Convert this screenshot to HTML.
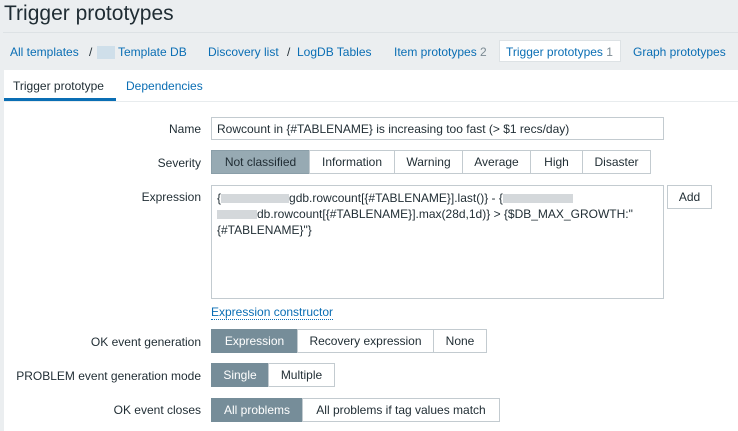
<!DOCTYPE html>
<html><head><style>
*{box-sizing:border-box;margin:0;padding:0}
body{width:738px;height:431px;overflow:hidden;background:#ebeef0;font-family:"Liberation Sans",sans-serif;font-size:12px;color:#1f2c33;position:relative}
.a{position:absolute;white-space:nowrap}
.lnk{color:#0a6eb4}
.lbl{position:absolute;right:537px;text-align:right;white-space:nowrap}
.bg{position:absolute;display:flex;height:24px}
.bg div{border:1px solid #c3cbd0;margin-left:-1px;background:#fff;display:flex;align-items:center;justify-content:center;height:24px}
.bg div.s{background:#768d99;color:#fff;border-color:#768d99}
.blur{display:inline-block;height:9px;background:#d4d8db;vertical-align:middle}
</style></head><body>
<div class="a" style="left:4px;top:2px;font-size:21px;color:#1f2c33">Trigger prototypes</div>
<div class="a" style="left:3px;top:32px;width:735px;height:1px;background:#dde2e5"></div>
<div class="a lnk" style="left:10px;top:45px">All templates</div>
<div class="a" style="left:89px;top:45px">/</div>
<div class="a" style="left:97px;top:46px;width:18px;height:13px;background:#cfdfea"></div>
<div class="a lnk" style="left:118px;top:45px">Template DB</div>
<div class="a lnk" style="left:208px;top:45px">Discovery list</div>
<div class="a" style="left:287px;top:45px">/</div>
<div class="a lnk" style="left:297px;top:45px">LogDB Tables</div>
<div class="a lnk" style="left:394px;top:45px">Item prototypes <span style="color:#7b8a93">2</span></div>
<div class="a" style="left:499px;top:40px;width:122px;height:22px;background:#fff;border:1px solid #dde2e5"></div>
<div class="a lnk" style="left:506px;top:45px">Trigger prototypes <span style="color:#7b8a93">1</span></div>
<div class="a lnk" style="left:633px;top:45px">Graph prototypes</div>
<div class="a" style="left:4px;top:70px;width:734px;height:361px;background:#fff"></div>
<div class="a" style="left:13px;top:79px">Trigger prototype</div>
<div class="a lnk" style="left:126px;top:79px">Dependencies</div>
<div class="a" style="left:4px;top:101px;width:734px;height:1px;background:#e8ecee"></div>
<div class="a" style="left:4px;top:98px;width:112px;height:3px;background:#0a6eb4"></div>

<div class="lbl" style="top:122px">Name</div>
<div class="a" style="left:211px;top:117px;width:453px;height:23px;border:1px solid #c3cbd0;padding:4px 5px">Rowcount in {#TABLENAME} is increasing too fast (&gt; $1 recs/day)</div>
<div class="lbl" style="top:156px">Severity</div>
<div class="bg" style="left:211px;top:150px">
<div class="s" style="width:99px;margin-left:0;background:#97aab3;color:#1f2c33;border-color:#8a9ea8">Not classified</div>
<div style="width:86px">Information</div>
<div style="width:69px">Warning</div>
<div style="width:69px">Average</div>
<div style="width:53px">High</div>
<div style="width:69px">Disaster</div>
</div>
<div class="lbl" style="top:190px">Expression</div>
<div class="a" style="left:211px;top:185px;width:453px;height:114px;border:1px solid #c3cbd0;padding:4px 5px;line-height:16px;white-space:normal">{<span class="blur" style="width:68px"></span>gdb.rowcount[{#TABLENAME}].last()} - {<span class="blur" style="width:70px"></span><br><span class="blur" style="width:40px"></span>db.rowcount[{#TABLENAME}].max(28d,1d)} &gt; {$DB_MAX_GROWTH:"<br>{#TABLENAME}"}</div>
<div class="a" style="left:667px;top:185px;width:45px;height:24px;border:1px solid #c3cbd0;text-align:center;line-height:22px">Add</div>
<div class="a lnk" style="left:211px;top:305px;border-bottom:1px dotted #0a6eb4;line-height:14px">Expression constructor</div>
<div class="lbl" style="top:335px">OK event generation</div>
<div class="bg" style="left:211px;top:329px">
<div class="s" style="width:87px;margin-left:0">Expression</div>
<div style="width:137px">Recovery expression</div>
<div style="width:54px">None</div>
</div>
<div class="lbl" style="top:369px">PROBLEM event generation mode</div>
<div class="bg" style="left:211px;top:363px">
<div class="s" style="width:58px;margin-left:0">Single</div>
<div style="width:67px">Multiple</div>
</div>
<div class="lbl" style="top:403px">OK event closes</div>
<div class="bg" style="left:211px;top:398px">
<div class="s" style="width:92px;margin-left:0">All problems</div>
<div style="width:198px">All problems if tag values match</div>
</div>
</body></html>
